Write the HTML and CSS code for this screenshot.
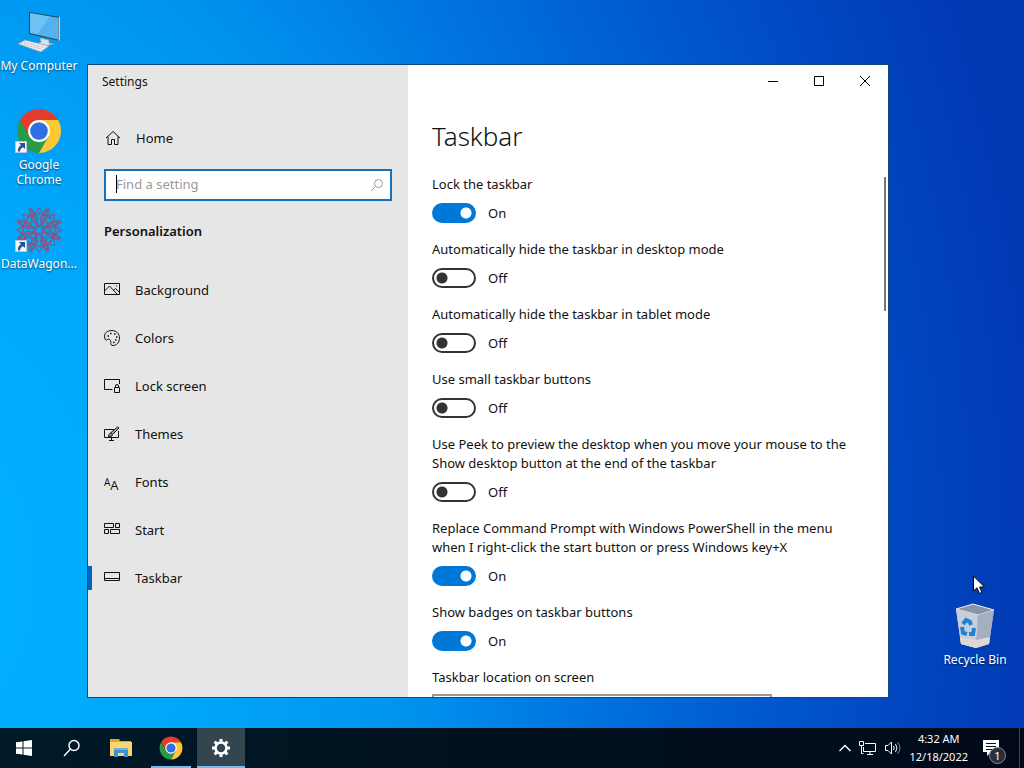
FILE: index.html
```html
<!DOCTYPE html>
<html lang="en">

<head>
    <meta charset="UTF-8">
    <meta name="viewport" content="width=device-width, initial-scale=1.0">
    <title>Settings</title>
    <link rel="stylesheet" href="styles.css">
</head>

<body>
    <!-- shared icons -->
    <svg class="defs" width="0" height="0" aria-hidden="true">
        <symbol id="chrome" viewBox="0 0 48 48">
            <path fill="#e33b2e" d="M43.05 13A22 22 0 0 0 4.95 13L14.47 29.5L24 24V13Z" />
            <path fill="#2b9a48" d="M4.95 13A22 22 0 0 0 24 46L33.53 29.5L24 24L14.47 29.5Z" />
            <path fill="#fcc934" d="M24 46A22 22 0 0 0 43.05 13H24V24L33.53 29.5Z" />
            <circle cx="24" cy="24" r="11" fill="#fff" />
            <circle cx="24" cy="24" r="8.8" fill="#2f6fe4" />
        </symbol>
        <symbol id="shortcut" viewBox="0 0 12 12">
            <rect x=".5" y=".5" width="11" height="11" fill="#f4f8fc" stroke="#b8c8d8" />
            <path fill="#27509b" d="M4 2h6v6L8 6.200C6 7 5 8.500 5 10.500H3C2.500 7.500 4 5.200 6 4.200Z" />
        </symbol>
    </svg>

    <main class="desktop">
        <div class="desktop-icons">
            <a class="desktop-icon" href="#">
                <svg width="48" height="48" viewBox="0 0 48 48">
                    <path fill="#d9e2e8" stroke="#8b9ba6" stroke-width=".6" d="M25 30l9 2v3l5 1-9 2-8-2 4-2Z" />
                    <path fill="#28465c" d="M14 4L45 9V33L14 26Z" />
                    <path fill="#c3d2dc" d="M43.500 9L45 9V33L43.500 32.600Z" />
                    <path fill="#54b2ef" d="M15 5L43 9.800V31.500L15 25Z" />
                    <path fill="#8ccff8" d="M15 5L35 8.500L22 26.600L15 25Z" opacity=".5" />
                    <path fill="#e8edf1" stroke="#8d9ba5" stroke-width=".7" d="M10 32L34 38L26 44L3 36Z" />
                    <path stroke="#a7b3bc" stroke-width=".8" stroke-dasharray="2 1" fill="none" d="M9 34l21 6M6.500 35.500l21 6" />
                </svg>
                <span>My Computer</span>
            </a>
            <a class="desktop-icon" href="#">
                <svg width="48" height="48" viewBox="0 0 48 48">
                    <use href="#chrome" width="48" height="48" />
                    <use href="#shortcut" x="0" y="34" width="12" height="12" />
                </svg>
                <span>Google Chrome</span>
            </a>
            <a class="desktop-icon" href="#">
                <svg width="48" height="48" viewBox="0 0 48 48">
                    <g fill="none" stroke="#7d5a86" stroke-width="1.100">
                        <g id="petals">
                            <path id="petal" d="M24 2L31 11L24 21L17 11ZM14 3L20 8H28L34 3L31 15L24 20L17 15Z" />
                            <use href="#petal" transform="rotate(90 24 24)" />
                            <use href="#petal" transform="rotate(180 24 24)" />
                            <use href="#petal" transform="rotate(270 24 24)" />
                        </g>
                        <use href="#petals" transform="rotate(45 24 24)" />
                    </g>
                    <g fill="none" stroke="#b04a62" stroke-width="1.200" stroke-dasharray="3 3">
                        <circle cx="24" cy="24" r="6" />
                        <circle cx="24" cy="24" r="11" />
                        <circle cx="24" cy="24" r="17" />
                    </g>
                    <use href="#shortcut" x="0" y="34" width="12" height="12" />
                </svg>
                <span>DataWagon...</span>
            </a>
        </div>

        <a class="desktop-icon recycle-bin" href="#">
            <svg width="48" height="48" viewBox="0 0 48 48">
                <path fill="#b3bdcb" d="M5 7L22 2L43 8L38 42L25 46L10 42Z" />
                <path fill="#8894a8" stroke="#e6edf5" d="M5 7L22 2L43 8L27 13Z" />
                <path fill="#c5ced9" d="M5 7L27 13L25 46L10 42Z" />
                <path fill="#a4afbf" d="M27 13L43 8L38 42L25 46Z" />
                <path fill="#ded9d3" d="M9 36L25 38L39 35L38 42L25 46L10 42Z" />
                <g fill="none" stroke="#1c83d6" stroke-width="4">
                    <path d="M12 22l3-4 4 2 1 3" />
                    <path d="M11 25l1 6 4 1" />
                    <path d="M18 32h4l1-6" />
                </g>
            </svg>
            <span>Recycle Bin</span>
        </a>

        <section class="window">
            <aside class="sidebar">
                <div class="window-title">Settings</div>
                <a class="home" href="#">
                    <svg width="16" height="16" viewBox="0 0 16 16">
                        <path d="M1 8L8 1.500L15 8M3 6.500V14.500H6.500V9.500H9.500V14.500H13V6.500" />
                    </svg>
                    Home
                </a>
                <div class="search">
                    <input type="text" placeholder="Find a setting" aria-label="Find a setting">
                    <span class="caret"></span>
                    <svg width="14" height="14" viewBox="0 0 14 14">
                        <circle cx="8.500" cy="5.500" r="4" />
                        <path d="M5.500 8.500L1 13" />
                    </svg>
                </div>
                <h2>Personalization</h2>
                <nav>
                    <a href="#">
                        <svg width="16" height="16" viewBox="0 0 16 16">
                            <path d="M.5 1.500h15v11H.5ZM.5 9L5.500 4L13 12M9.500 8.500L11.500 6.500L15.500 10.500" />
                            <path d="M12 4h1" />
                        </svg>
                        Background
                    </a>
                    <a href="#">
                        <svg width="16" height="16" viewBox="0 0 16 16">
                            <path d="M1 9C-1 3 3.500 .5 8 .5C12.500 .5 15.500 4 15.500 8C15.500 12 13 15.500 9 15.500C6 15.500 7 13 6.800 11.500C6.500 9.500 5 8.500 3.500 9.500C2.500 10.200 1.500 10.500 1 9Z" />
                            <path stroke-width="1.600" d="M3.500 6h1.500M6 3.500h1.500M10 4h1.500M12 7h1.500M11 10h1.500M9 12.500h1.500" />
                        </svg>
                        Colors
                    </a>
                    <a href="#">
                        <svg width="16" height="16" viewBox="0 0 16 16">
                            <path d="M8.500 11.500H.5v-10h15V6M10.500 9.500h5v5h-5ZM11.500 9.500V8a1.500 1.500 0 0 1 3 0V9.500" />
                        </svg>
                        Lock screen
                    </a>
                    <a href="#">
                        <svg width="16" height="16" viewBox="0 0 16 16">
                            <path d="M10 3.500H.5v8h14V5M7.500 11.500v2.500M5 14.500h5" />
                            <path d="M4 10C6 10 4.500 7.500 6.500 7L13.500 1L15 2L8.500 8.500C8.500 10.500 6 10.800 4 10ZM6.500 7L8.500 8.500" fill="#aaa" />
                        </svg>
                        Themes
                    </a>
                    <a href="#">
                        <span class="fonts-icon" aria-hidden="true"><b>A</b><i>A</i></span>
                        Fonts
                    </a>
                    <a href="#">
                        <svg width="16" height="16" viewBox="0 0 16 16">
                            <path d="M.5 1.500h9v4h-9ZM11.500 1.500h4v4h-4ZM.5 7.500h4v4h-4ZM6.500 7.500h9v4h-9Z" />
                        </svg>
                        Start
                    </a>
                    <a class="active" href="#">
                        <svg width="16" height="16" viewBox="0 0 16 16">
                            <path d="M.5 2.500h15v8H.5ZM.5 8.500h15" />
                        </svg>
                        Taskbar
                    </a>
                </nav>
            </aside>

            <div class="content">
                <div class="window-buttons">
                    <button type="button" aria-label="Minimize">
                        <svg width="10" height="10" viewBox="0 0 10 10"><path d="M0 5.500h10" /></svg>
                    </button>
                    <button type="button" aria-label="Maximize">
                        <svg width="10" height="10" viewBox="0 0 10 10"><path d="M.5 .5h9v9h-9Z" /></svg>
                    </button>
                    <button type="button" aria-label="Close">
                        <svg width="10" height="10" viewBox="0 0 10 10"><path d="M0 0L10 10M10 0L0 10" /></svg>
                    </button>
                </div>
                <h1>Taskbar</h1>
                <form class="options">
                    <div class="option">
                        <label for="lock">Lock the taskbar</label>
                        <div class="toggle"><input type="checkbox" id="lock" checked><span>On</span></div>
                    </div>
                    <div class="option">
                        <label for="hideDesktop">Automatically hide the taskbar in desktop mode</label>
                        <div class="toggle"><input type="checkbox" id="hideDesktop"><span>Off</span></div>
                    </div>
                    <div class="option">
                        <label for="hideTablet">Automatically hide the taskbar in tablet mode</label>
                        <div class="toggle"><input type="checkbox" id="hideTablet"><span>Off</span></div>
                    </div>
                    <div class="option">
                        <label for="small">Use small taskbar buttons</label>
                        <div class="toggle"><input type="checkbox" id="small"><span>Off</span></div>
                    </div>
                    <div class="option">
                        <label for="peek">Use Peek to preview the desktop when you move your mouse to the Show desktop button at the end of the taskbar</label>
                        <div class="toggle"><input type="checkbox" id="peek"><span>Off</span></div>
                    </div>
                    <div class="option">
                        <label for="powershell">Replace Command Prompt with Windows PowerShell in the menu when I right-click the start button or press Windows key+X</label>
                        <div class="toggle"><input type="checkbox" id="powershell" checked><span>On</span></div>
                    </div>
                    <div class="option">
                        <label for="badges">Show badges on taskbar buttons</label>
                        <div class="toggle"><input type="checkbox" id="badges" checked><span>On</span></div>
                    </div>
                    <div class="option">
                        <label for="location">Taskbar location on screen</label>
                        <select id="location">
                            <option>Bottom</option>
                        </select>
                    </div>
                </form>
                <div class="scroll-thumb"></div>
            </div>
        </section>

        <svg class="cursor" width="13" height="20" viewBox="0 0 13 20">
            <path fill="#fff" stroke="#000" d="M.5 1V16L4 12.800L6.500 18.500L9 17.400L6.600 12H11.500Z" />
        </svg>
    </main>

    <footer class="taskbar">
        <button type="button" aria-label="Start">
            <svg width="16" height="16" viewBox="0 0 16 16">
                <path fill="#fff" d="M0 2.300L6.500 1.400V7.500H0ZM7.500 1.200L16 0V7.500H7.500ZM0 8.500H6.500V14.600L0 13.700ZM7.500 8.500H16V16L7.500 14.800Z" />
            </svg>
        </button>
        <button type="button" aria-label="Search">
            <svg width="18" height="18" viewBox="0 0 18 18" fill="none" stroke="#fff" stroke-width="1.400">
                <circle cx="11" cy="6.500" r="5" />
                <path d="M7.500 10L1 17" />
            </svg>
        </button>
        <div class="apps">
            <button type="button" aria-label="File Explorer">
                <svg width="24" height="20" viewBox="0 0 24 20">
                    <path fill="#e3a52c" d="M1 1h9l1 2h11v4H1Z" />
                    <path fill="#fbd569" d="M1 4h22v14H1Z" />
                    <path fill="#3f90cf" d="M5 10h14v9h-4v-4H9v4H5Z" />
                    <path fill="#66b5e6" d="M5 10h14v2H5Z" />
                </svg>
            </button>
            <button class="running" type="button" aria-label="Google Chrome">
                <svg width="24" height="24" viewBox="1 1 46 46"><use href="#chrome" width="48" height="48" /></svg>
            </button>
            <button class="running current" type="button" aria-label="Settings">
                <svg width="20" height="20" viewBox="0 0 20 20" fill="none" stroke="#fff">
                    <circle cx="10" cy="10" r="5.500" stroke-width="2.600" />
                    <path stroke-width="3" d="M10 1v3M10 16v3M1 10h3M16 10h3M3.600 3.600l2.200 2.200M14.200 14.200l2.200 2.200M3.600 16.400l2.200-2.200M14.200 5.800l2.200-2.200" />
                </svg>
            </button>
        </div>
        <div class="tray">
            <svg width="12" height="8" viewBox="0 0 12 8"><path stroke-width="1.400" d="M.5 7L6 1.500L11.500 7" /></svg>
            <svg width="18" height="14" viewBox="0 0 18 14">
                <path d="M6 2.500h10.500v8H4.500V6M8 13.500h6M11 10.500v3M.5 .5h4v4h-4ZM2.500 4.500V12.500h2" />
            </svg>
            <svg width="16" height="14" viewBox="0 0 16 14">
                <path d="M.5 4.500H3L6.500 1V13L3 9.500H.5ZM8.500 5q1.500 2 0 4M10.500 3q3 4 0 8" />
                <path d="M12.500 1q5 6 0 12" opacity=".5" />
            </svg>
            <time class="clock">4:32 AM<br>12/18/2022</time>
            <button class="notifications" type="button" aria-label="Notifications">
                <svg width="16" height="16" viewBox="0 0 16 16">
                    <path fill="#fff" stroke="none" d="M0 0H16V12H8L4 16V12H0Z" />
                    <path stroke="#05101c" d="M3 3.500h10M3 6.500h10M3 9.500h6" />
                </svg>
                <span class="badge">1</span>
            </button>
        </div>
    </footer>

    <script>
        document.querySelectorAll('.toggle input').forEach(function (input) {
            input.addEventListener('change', function () {
                input.nextElementSibling.textContent = input.checked ? 'On' : 'Off';
            });
        });
    </script>
</body>

</html>
```
FILE: styles.css
```css
* {
    box-sizing: border-box;
}

body {
    margin: 0;
    height: 100vh;
    display: flex;
    flex-direction: column;
    overflow: hidden;
    font-family: "Noto Sans", "Open Sans", sans-serif;
    font-size: 13px;
    color: #111;
    background: radial-gradient(ellipse 125% 220% at -10% 75%, #00b4ff 0%, #00a8fb 22%, #0094ee 40%, #0074e0 54%, #0058d0 68%, #0048c2 78%, #0038b2 90%);
}

a {
    color: inherit;
    text-decoration: none;
}

button {
    padding: 0;
    border: none;
    background: none;
    font: inherit;
    color: inherit;
}

.defs {
    position: absolute;
}

.desktop {
    flex: 1;
    position: relative;
    min-height: 0;
}

/* desktop icons */
.desktop-icons {
    width: 78px;
    padding-top: 8px;
}

.desktop-icon {
    display: flex;
    flex-direction: column;
    align-items: center;
    gap: 2px;
    width: 78px;
    height: 99px;
    font-size: 12px;
    line-height: 15px;
    text-align: center;
    color: #fff;
    text-shadow: 0 1px 2px rgba(0, 0, 0, 0.6);
}

.recycle-bin {
    position: absolute;
    right: 10px;
    bottom: 61px;
    height: auto;
}

.cursor {
    position: absolute;
    right: 38px;
    bottom: 133px;
}

/* settings window */
.window {
    position: absolute;
    inset: 64px 135px 30px 87px;
    display: flex;
    border: 1px solid #12487c;
    background: #fff;
    overflow: hidden;
}

.sidebar {
    flex: 0 0 40%;
    background: #e6e6e6;
}

.sidebar svg {
    flex: none;
    fill: none;
    stroke: #111;
}

.window-title {
    padding-left: 14px;
    font-size: 12px;
    line-height: 34px;
}

.home {
    display: flex;
    align-items: center;
    gap: 15px;
    height: 48px;
    margin-top: 15px;
    padding-left: 17px;
}

.search {
    position: relative;
    height: 32px;
    margin: 7px 16px 0;
}

.search input {
    width: 100%;
    height: 100%;
    padding: 0 32px 2px 10px;
    border: 2px solid #1a6fb5;
    border-radius: 0;
    outline: none;
    font: inherit;
    background: #fff;
}

.search input::placeholder {
    color: #999;
}

.search .caret {
    position: absolute;
    top: 6px;
    left: 12px;
    width: 1px;
    height: 18px;
    background: #000;
}

.search svg {
    position: absolute;
    top: 9px;
    right: 8px;
    stroke: #999;
}

h2 {
    margin: 20px 16px 25px;
    font-size: 13px;
    font-weight: 600;
    line-height: 20px;
}

nav a {
    display: flex;
    align-items: center;
    gap: 15px;
    height: 48px;
    padding-left: 16px;
}

nav .active {
    background: linear-gradient(#0067c0, #0067c0) left center / 4px 24px no-repeat;
}

.fonts-icon {
    width: 16px;
    height: 16px;
    line-height: 16px;
    white-space: nowrap;
}

.fonts-icon b,
.fonts-icon i {
    font-family: "Open Sans", sans-serif;
    font-style: normal;
    font-weight: 500;
    font-size: 10px;
    vertical-align: 4px;
}

.fonts-icon i {
    font-size: 13px;
    vertical-align: 0;
}

.content {
    flex: 1;
    position: relative;
    padding-left: 24px;
}

.window-buttons {
    display: flex;
    justify-content: flex-end;
}

.window-buttons button {
    display: flex;
    align-items: center;
    justify-content: center;
    width: 46px;
    height: 32px;
}

.window-buttons svg {
    fill: none;
    stroke: #000;
}

h1 {
    margin: 20px 0;
    font-size: 26px;
    font-weight: 300;
    line-height: 38px;
}

.option {
    margin-bottom: 16px;
}

.option label {
    display: block;
    max-width: 430px;
    line-height: 19px;
}

.toggle {
    display: flex;
    align-items: center;
    gap: 12px;
    height: 20px;
    margin-top: 9px;
    margin-bottom: 17px;
}

.toggle input {
    appearance: none;
    width: 44px;
    height: 20px;
    margin: 0;
    border: 2px solid #333;
    border-radius: 10px;
    background: radial-gradient(circle at 8px 8px, #333 5px, transparent 6px);
}

.toggle input:checked {
    border-color: #0078d7;
    background: radial-gradient(circle at 32px 8px, #fff 5px, #0078d7 6px);
}

.option select {
    width: 340px;
    max-width: 90%;
    height: 32px;
    margin-top: 7px;
    border: 2px solid #999;
    border-radius: 0;
    background: #fff;
    font: inherit;
}

.scroll-thumb {
    position: absolute;
    top: 112px;
    right: 2px;
    width: 2px;
    height: 134px;
    background: #777;
}

/* bottom bar */
.taskbar {
    display: flex;
    height: 40px;
    color: #fff;
    background: linear-gradient(90deg, #001a28, #01101e 50%, #020a1a);
}

.taskbar button {
    display: flex;
    align-items: center;
    justify-content: center;
    width: 48px;
    height: 40px;
}

.apps {
    display: flex;
    gap: 2px;
    margin-left: 1px;
}

.taskbar .running {
    background: linear-gradient(#76b9ed, #76b9ed) center bottom / 40px 2px no-repeat;
}

.taskbar .current {
    background-color: #33454f;
    background-size: 48px 2px;
}

.tray {
    display: flex;
    align-items: center;
    gap: 8px;
    margin-left: auto;
    margin-right: 4px;
    padding-right: 13px;
    border-right: 1px solid #3a4450;
}

.tray svg {
    fill: none;
    stroke: #fff;
}

.clock {
    font-size: 11px;
    line-height: 18px;
    text-align: center;
}

.taskbar .notifications {
    position: relative;
    width: 30px;
}

.badge {
    position: absolute;
    right: 0;
    bottom: 4px;
    width: 17px;
    height: 17px;
    border: 1px solid #888;
    border-radius: 50%;
    background: #2a3038;
    font-size: 11px;
    line-height: 15px;
    text-align: center;
}
```
